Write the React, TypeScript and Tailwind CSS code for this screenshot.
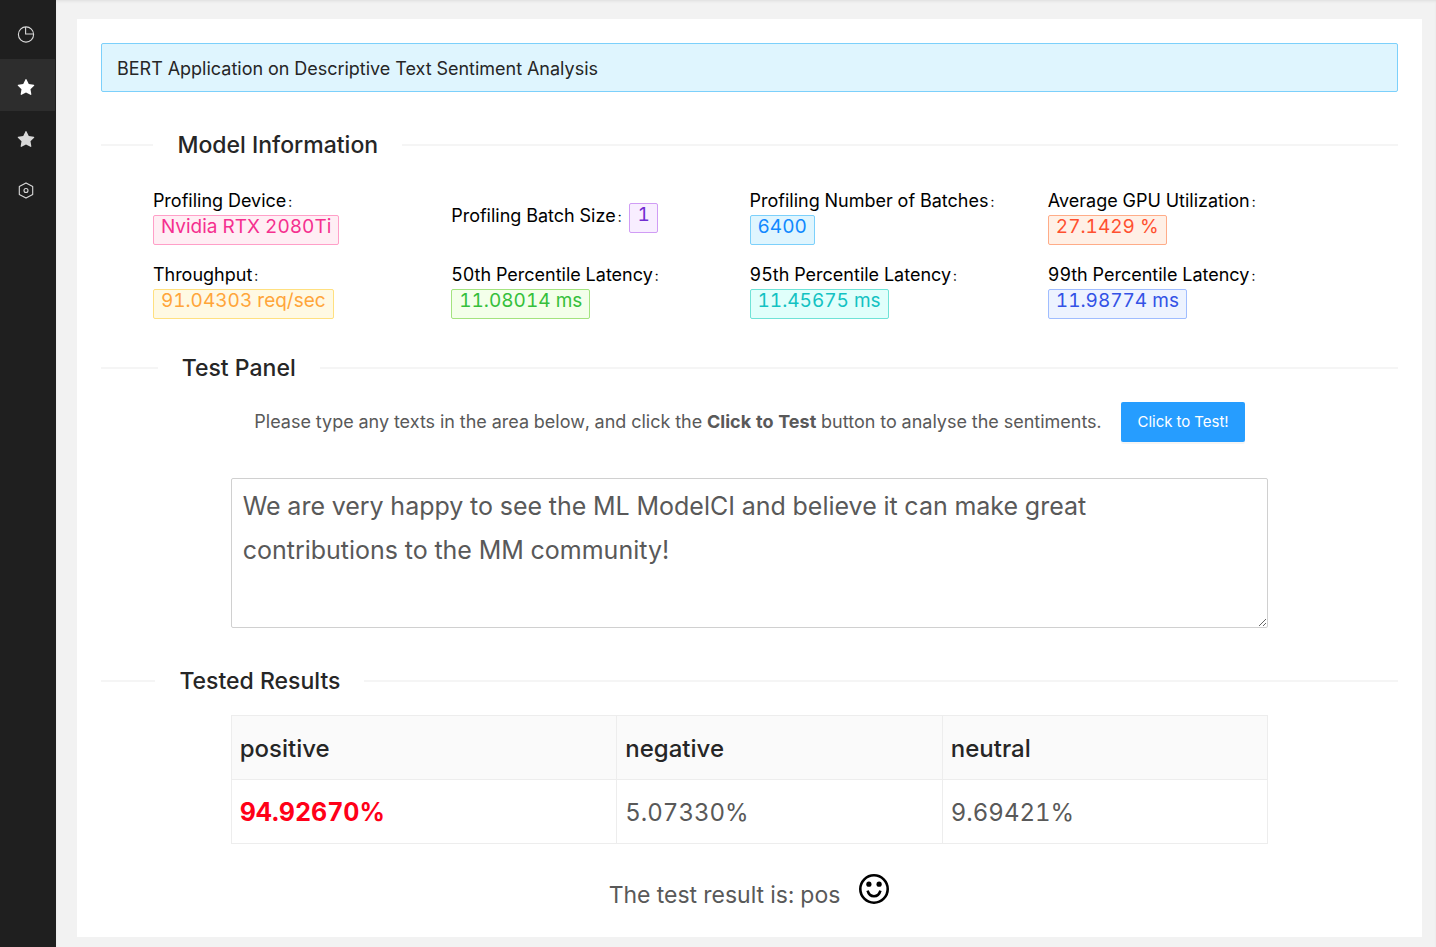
import React, { useState } from "react";
import { AiFillStar } from "react-icons/ai";

const metrics = [
  { label: "Profiling Device", value: "Nvidia RTX 2080Ti", tone: "text-[#f5308f] bg-[#ffeef4] border-[#ff9fc8]" },
  { label: "Profiling Batch Size", value: "1", tone: "text-[#722ed1] bg-[#f8eeff] border-[#d09cf5]" },
  { label: "Profiling Number of Batches", value: "6400", tone: "text-[#1088ff] bg-[#dff5fe] border-[#7cd0fb]" },
  { label: "Average GPU Utilization", value: "27.1429 %", tone: "text-[#ff5030] bg-[#fff0e6] border-[#ffac88]" },
  { label: "Throughput", value: "91.04303 req/sec", tone: "text-[#ffa53a] bg-[#fff9e3] border-[#ffe080]" },
  { label: "50th Percentile Latency", value: "11.08014 ms", tone: "text-[#35bf3c] bg-[#f3ffea] border-[#a3e37f]" },
  { label: "95th Percentile Latency", value: "11.45675 ms", tone: "text-[#13c2c2] bg-[#e0fffb] border-[#6fe3d7]" },
  { label: "99th Percentile Latency", value: "11.98774 ms", tone: "text-[#3352e6] bg-[#edf3ff] border-[#a0bdff]" },
];

function PieIcon() {
  return (
    <svg viewBox="0 0 18 18" className="size-[18px]" fill="none" stroke="currentColor" strokeWidth="1.1" aria-hidden="true">
      <circle cx="9" cy="8.5" r="7.6" />
      <path d="M8.6 1.1V8H16.4" />
    </svg>
  );
}

function HexIcon() {
  return (
    <svg viewBox="0 0 18 18" className="size-[18px]" fill="none" stroke="currentColor" strokeWidth="1.1" strokeLinejoin="round" aria-hidden="true">
      <path d="M9 0.9L15.7 4.6V12.4L9 16.1L2.3 12.4V4.6Z" />
      <circle cx="9" cy="8.5" r="2" />
    </svg>
  );
}

function StarIcon() {
  return <AiFillStar viewBox="0 -40 1024 1024" className="size-5" aria-hidden="true" />;
}

function SmileIcon() {
  return (
    <svg viewBox="0 0 32 32" className="size-8" fill="none" stroke="#000" strokeWidth="2.6" aria-hidden="true">
      <circle cx="16" cy="16" r="13.7" />
      <circle cx="10.9" cy="11.2" r="2.6" fill="#000" stroke="none" />
      <circle cx="21.1" cy="11.2" r="2.6" fill="#000" stroke="none" />
      <path d="M9.6 17.6C10.6 21.4 13 23.2 16 23.2S21.4 21.4 22.4 17.6" />
    </svg>
  );
}

function SectionTitle({ children }: { children: React.ReactNode }) {
  return (
    <div className="flex items-center before:h-[2px] before:w-[5%] before:bg-[#f5f5f5] before:content-[''] after:h-[2px] after:w-[95%] after:bg-[#f5f5f5] after:content-['']">
      <h2 className="px-6 text-[23px] leading-9 font-medium whitespace-nowrap text-[#262626]">{children}</h2>
    </div>
  );
}

const nav = [
  { name: "Dashboard", icon: <PieIcon />, active: false },
  { name: "Test", icon: <StarIcon />, active: true },
  { name: "Models", icon: <StarIcon />, active: false },
  { name: "Settings", icon: <HexIcon />, active: false },
];

export default function App() {
  const [text, setText] = useState(
    "We are very happy to see the ML ModelCI and believe it can make great contributions to the MM community!"
  );
  return (
    <div className="flex min-h-screen bg-[#f2f2f2] font-[Inter,'Liberation_Sans',sans-serif] text-[#595959] tabular-nums">
      <nav className="w-14 shrink-0 bg-[#1f1f1f] pt-[7px] pr-px">
        {nav.map((item) => (
          <a
            key={item.name}
            href="#"
            aria-label={item.name}
            className={
              item.active
                ? "flex h-[52px] items-center justify-center bg-[#2d2d2d] pt-1 pr-[3px] text-white"
                : "flex h-[52px] items-center justify-center pt-1 pr-[3px] text-[#d9d9d9]"
            }
          >
            {item.icon}
          </a>
        ))}
      </nav>

      <div className="min-w-0 flex-1 pt-[19px] pr-[14px] pb-[10px] pl-[21px] shadow-[inset_0_2px_3px_-1px_#dcdcdc]">
        <main className="min-h-full bg-white p-6">
          <h1 className="rounded-[2px] border border-[#7cd0fb] bg-[#dff5fe] px-[15px] pt-[11px] pb-[9px] text-lg leading-[27px] font-normal text-[#262626]">
            BERT Application on Descriptive Text Sentiment Analysis
          </h1>

          <section className="pt-[35px]">
            <SectionTitle>Model Information</SectionTitle>
            <dl className="grid grid-cols-4 gap-y-[19px] px-[4%] pt-[27px] text-black">
              {metrics.map((m) => (
                <div key={m.label} className="flex min-h-[55px] flex-wrap content-center items-center pr-6">
                  <dt className="mr-2 pb-1 text-lg leading-[21px]">
                    {m.label}
                    <span className="ml-[2px] text-sm leading-none">:</span>
                  </dt>
                  <dd className={"h-[30px] rounded-[2px] border px-[7px] text-[19px] leading-[22px] " + m.tone}>{m.value}</dd>
                </div>
              ))}
            </dl>
          </section>

          <section className="pt-[31px]">
            <SectionTitle>Test Panel</SectionTitle>
            <div className="flex items-center justify-center gap-5 pt-4">
              <label htmlFor="sample" className="text-lg">
                Please type any texts in the area below, and click the <strong>Click to Test</strong> button to analyse the sentiments.
              </label>
              <button type="button" className="h-10 shrink-0 rounded-[2px] bg-[#269dff] px-4 text-[15px] text-white shadow-[0_2px_0_rgba(0,0,0,0.04)]">
                Click to Test!
              </button>
            </div>
            <div className="px-[10%] pt-9">
              <textarea
                id="sample"
                value={text}
                onChange={(e) => setText(e.target.value)}
                className="block h-[150px] w-full rounded-[2px] border border-[#d0d0d0] bg-white py-[5px] pr-8 pl-[11px] text-[25px] leading-[44px]"
              />
            </div>
          </section>

          <section className="pt-[35px]">
            <SectionTitle>Tested Results</SectionTitle>
            <div className="px-[10%] pt-4">
              <table className="w-full table-fixed border-collapse text-left text-2xl">
                <thead>
                  <tr className="h-16 bg-[#fafafa] text-[#262626]">
                    <th className="w-[37.2%] border border-[#ededed] px-2 pt-[2px] font-medium">positive</th>
                    <th className="border border-[#ededed] px-2 pt-[2px] font-medium">negative</th>
                    <th className="border border-[#ededed] px-2 pt-[2px] font-medium">neutral</th>
                  </tr>
                </thead>
                <tbody>
                  <tr className="h-16">
                    <td className="border border-[#ededed] px-2 pt-[2px] text-[25px] font-bold text-[#ff0018]">94.92670%</td>
                    <td className="border border-[#ededed] px-2 pt-[2px]">5.07330%</td>
                    <td className="border border-[#ededed] px-2 pt-[2px]">9.69421%</td>
                  </tr>
                </tbody>
              </table>
            </div>
            <div className="flex justify-center gap-[18px] pt-[29px]">
              <p className="pt-1 text-[23px] leading-9">The test result is: pos</p>
              <SmileIcon />
            </div>
          </section>
        </main>
      </div>
    </div>
  );
}
